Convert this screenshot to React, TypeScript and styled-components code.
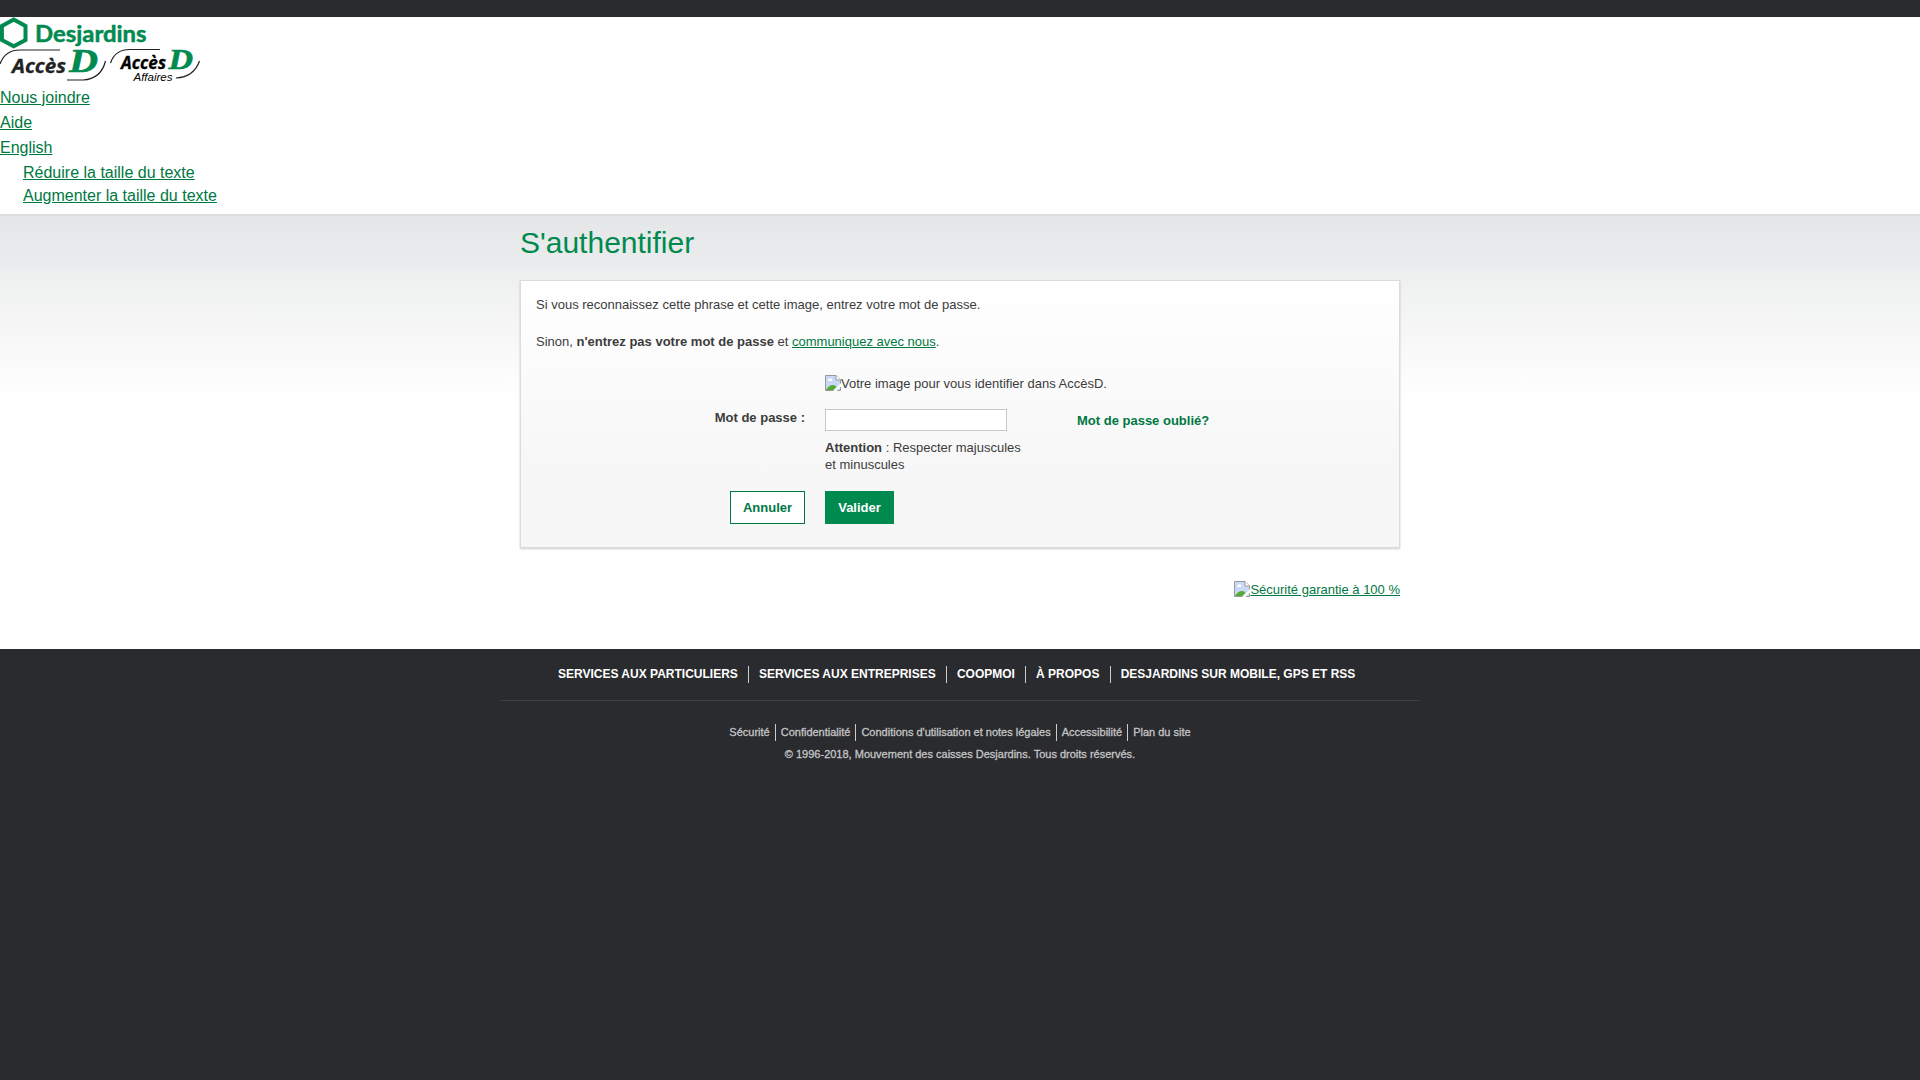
import React from 'react';
import styled, { createGlobalStyle } from 'styled-components';

const Global = createGlobalStyle`
  * { box-sizing: border-box; }
  body { margin: 0; background: #2a2b2f; font-family: "Liberation Sans", Arial, sans-serif; color: #3c3c3c; font-size: 13px; }
  p, h1, ul { margin: 0; padding: 0; }
  ul { list-style: none; }
`;
const Header = styled.header`
  margin-top: 17px; height: 199px; background: #fff; border-bottom: 2px solid #dcdddd;
`;
const Logos = styled.div`display: flex; height: 68px; svg { display: block; }`;
const HeadLink = styled.li<{ $indent?: boolean }>`
  font-size: 16px;
  height: ${p => (p.$indent ? 23 : 25)}px;
  line-height: 25px;
  padding-left: ${p => (p.$indent ? 23 : 0)}px;
`;
const Link = styled.a<{ $bold?: boolean }>`
  color: #007842; text-decoration: ${p => (p.$bold ? 'none' : 'underline')};
  font-weight: ${p => (p.$bold ? 700 : 400)};
`;
const Main = styled.main`
  height: 433px; display: flex; justify-content: center;
  background: #fff linear-gradient(#e5e6e8 0, #ebecee 50px, #eeefef 55px, #fff 184px) no-repeat;
`;
const Column = styled.div`width: 880px; display: flex; flex-direction: column;`;
const Title = styled.h1`font-size: 30px; font-weight: 400; color: #008a4f; line-height: 36px; padding-top: 9px; height: 64px;`;
const Card = styled.section`
  height: 268px; border: 1px solid #dcdcdc; background: linear-gradient(#fff, #f7f7f7 70%);
  box-shadow: 0 1px 2px rgba(0,0,0,.2); padding: 15px; line-height: 17px;
`;
const Para = styled.p`height: 37px;`;
const Form = styled.div`display: grid; grid-template-columns: 269px 232px 1fr; column-gap: 20px; grid-template-rows: 34px 82px 33px; margin-top: 5px;`;
const Cell = styled.div<{ $right?: boolean; $top?: number }>`
  text-align: ${p => (p.$right ? 'right' : 'left')};
  padding-top: ${p => p.$top || 0}px;
  white-space: nowrap;
`;
const Field = styled.input`display: block; width: 182px; height: 22px; border: 1px solid #c8c8c8; background: #fff; margin: 0 0 8px; padding: 0;`;
const Button = styled.button<{ $primary?: boolean }>`
  height: 33px; width: ${p => (p.$primary ? 69 : 75)}px; padding: 0; border: 1px solid ${p => (p.$primary ? '#008a4f' : '#007842')};
  background: ${p => (p.$primary ? '#008a4f' : '#fff')}; color: ${p => (p.$primary ? '#fff' : '#007842')};
  font: 700 13px "Liberation Sans", Arial, sans-serif;
  display: inline-block; vertical-align: top;
`;
const Broken = styled.span`display: inline-flex; svg { display: block; }`;
const Seal = styled.div`align-self: flex-end; margin-top: 33px; line-height: 17px;`;
const Footer = styled.footer`width: 920px; margin: 0 auto; display: flex; flex-direction: column; align-items: center;`;
const Primary = styled.ul`display: flex; height: 52px; width: 920px; padding: 17px 0 0 58px; border-bottom: 1px solid #3e3f40;`;
const PrimaryItem = styled.li`
  color: #fff; font-weight: 700; font-size: 12px; height: 17px; line-height: 17px; padding-right: 10.2px; margin-right: 10px;
  border-right: 1px solid #ccc; white-space: nowrap;
  &:last-child { border: 0; }
`;
const Secondary = styled.ul`display: flex; margin-top: 23px;`;
const SecondaryItem = styled.li`
  color: #c4c4c4; font-size: 11px; -webkit-text-stroke: .3px #c4c4c4;
  height: 17px; line-height: 16px; padding-right: 5px; margin-right: 5px; border-right: 1px solid #ccc; white-space: nowrap;
  &:last-child { border: 0; padding: 0; margin: 0; }
`;
const Copyright = styled.p`color: #c4c4c4; font-size: 11px; -webkit-text-stroke: .3px #c4c4c4; line-height: 14px; margin-top: 6px;`;

const BrokenImage = () => (
  <svg width="16" height="16" viewBox="0 0 16 16">
    <path d="M.5 .5H11L15.500 5V15.500H.5Z" fill="#c9d8f6" stroke="#999" />
    <path d="M11 .5V5H15.500" fill="#fff" stroke="#999" />
    <path d="M1 15Q4 10 8 10Q10.500 10 11.500 12L8.500 15Z" fill="#55aa35" />
    <path d="M8 16L16 8V11.500L11.500 16Z" fill="#fafafa" />
    <path d="M3 6a1.500 1.500 0 0 1 1.500-2a1.500 1.500 0 0 1 2.500 2Z" fill="#fff" />
  </svg>
);
const Brand = () => (
  <svg width="205" height="68" viewBox="0 0 205 68">
    <path d="M13.700 2.500L25.500 9V23L13.700 29.300L1.900 23V9Z" fill="none" stroke="#008a4f" strokeWidth="4" />
    <text x="35" y="24.500" fontFamily="Lato, sans-serif" fontWeight="700" fontSize="23.500" stroke="#008a4f" strokeWidth=".5" textLength="111.500" lengthAdjust="spacingAndGlyphs" fill="#008a4f">Desjardins</text>
    <g fill="none" stroke="#222" strokeWidth="1.200">
      <path d="M0 47Q5 33 20 33H60" />
      <path d="M105.500 44Q101 62 83 63H67" />
      <path d="M110.500 46Q115 32.500 130 32.500H160" />
      <path d="M199.500 44Q194 60 176 61" />
    </g>
    <g fontFamily="'Open Sans', sans-serif" fontWeight="700" fontStyle="italic" strokeWidth=".3">
      <text x="12" y="55.500" fontSize="19.500" fill="#222" stroke="#222" textLength="54" lengthAdjust="spacingAndGlyphs">Accès</text>
      <text x="121" y="51.700" fontSize="17" fill="#000" stroke="#000" textLength="45" lengthAdjust="spacingAndGlyphs">Accès</text>
    </g>
    <g fontFamily="'Liberation Serif', serif" fontWeight="700" fontStyle="italic" fill="#008a4f" stroke="#008a4f" strokeWidth=".6">
      <text x="69" y="55.300" fontSize="34.500" textLength="29" lengthAdjust="spacingAndGlyphs">D</text>
      <text x="168.500" y="51.500" fontSize="28.500" textLength="24.500" lengthAdjust="spacingAndGlyphs">D</text>
    </g>
    <text x="133.500" y="63.700" fontFamily="'Liberation Sans', sans-serif" fontStyle="italic" fontSize="11.500" fill="#000" textLength="39" lengthAdjust="spacingAndGlyphs">Affaires</text>
  </svg>
);

export default function App() {
  return (
    <>
      <Global />
      <Header>
        <Logos><Brand /></Logos>
        <ul>
          <HeadLink><Link>Nous joindre</Link></HeadLink>
          <HeadLink><Link>Aide</Link></HeadLink>
          <HeadLink><Link>English</Link></HeadLink>
          <HeadLink $indent><Link>Réduire la taille du texte</Link></HeadLink>
          <HeadLink $indent><Link>Augmenter la taille du texte</Link></HeadLink>
        </ul>
      </Header>
      <Main>
        <Column>
          <Title>S'authentifier</Title>
          <Card>
            <Para>Si vous reconnaissez cette phrase et cette image, entrez votre mot de passe.</Para>
            <Para>Sinon, <b>n'entrez pas votre mot de passe</b> et <Link>communiquez avec nous</Link>.</Para>
            <Form>
              <Cell />
              <Cell><Broken><BrokenImage />Votre image pour vous identifier dans AccèsD.</Broken></Cell>
              <Cell />
              <Cell $right><b>Mot de passe :</b></Cell>
              <Cell><Field /><b>Attention</b> : Respecter majuscules<br />et minuscules</Cell>
              <Cell $top={3}><Link $bold>Mot de passe oublié?</Link></Cell>
              <Cell $right><Button>Annuler</Button></Cell>
              <Cell><Button $primary>Valider</Button></Cell>
            </Form>
          </Card>
          <Seal><Link><Broken><BrokenImage /><u>Sécurité garantie à 100 %</u></Broken></Link></Seal>
        </Column>
      </Main>
      <Footer>
        <Primary>
          {['SERVICES AUX PARTICULIERS', 'SERVICES AUX ENTREPRISES', 'COOPMOI', 'À PROPOS', 'DESJARDINS SUR MOBILE, GPS ET RSS'].map(t => <PrimaryItem key={t}>{t}</PrimaryItem>)}
        </Primary>
        <Secondary>
          {['Sécurité', 'Confidentialité', "Conditions d'utilisation et notes légales", 'Accessibilité', 'Plan du site'].map(t => <SecondaryItem key={t}>{t}</SecondaryItem>)}
        </Secondary>
        <Copyright>© 1996-2018, Mouvement des caisses Desjardins. Tous droits réservés.</Copyright>
      </Footer>
    </>
  );
}
